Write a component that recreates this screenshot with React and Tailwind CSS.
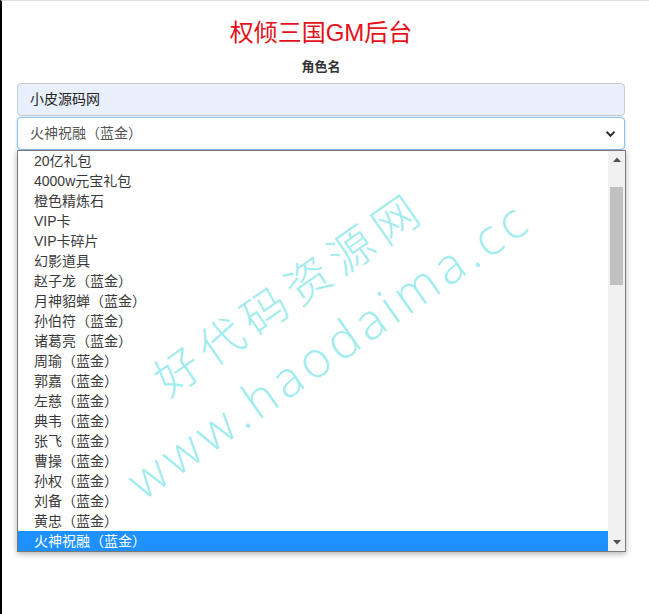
import React from "react";

const items = [
  "20亿礼包",
  "4000w元宝礼包",
  "橙色精炼石",
  "VIP卡",
  "VIP卡碎片",
  "幻影道具",
  "赵子龙（蓝金）",
  "月神貂蝉（蓝金）",
  "孙伯符（蓝金）",
  "诸葛亮（蓝金）",
  "周瑜（蓝金）",
  "郭嘉（蓝金）",
  "左慈（蓝金）",
  "典韦（蓝金）",
  "张飞（蓝金）",
  "曹操（蓝金）",
  "孙权（蓝金）",
  "刘备（蓝金）",
  "黄忠（蓝金）",
  "火神祝融（蓝金）",
];

export default function App() {
  return (
    <div
      className="relative w-[649px] h-[614px] overflow-hidden bg-white border-l-[2px] border-l-black border-t border-t-[#dedede]"
      style={{ fontFamily: '"Liberation Sans", "Noto Sans CJK SC", sans-serif' }}
    >
      <div className="ml-[15px] w-[608px] flex flex-col">
        <h1 className="pt-[18px] text-center text-[24px] leading-[28px] text-[#e3121b]">
          权倾三国GM后台
        </h1>
        <div className="mt-[11px] text-center text-[13px] leading-[18px] font-bold text-[#333]">
          角色名
        </div>
        <div className="mt-[7px] h-[33px] rounded-[4px] border border-[#c8ccd0] bg-[#e8f0fe] pl-[12px] flex items-center text-[14px] text-[#222]">
          小皮源码网
        </div>
        <div className="mt-[1px] h-[33px] rounded-[4px] border border-[#8fc1ea] bg-white pl-[12px] pr-[8px] flex items-center justify-between text-[14px] text-[#555] shadow-[0_0_3px_rgba(102,175,233,0.5)]">
          <span>火神祝融（蓝金）</span>
          <svg width="11" height="8" viewBox="0 0 11 8">
            <path d="M1.5 1.8 L5.5 5.8 L9.5 1.8" fill="none" stroke="#333" strokeWidth="2" />
          </svg>
        </div>
        <div className="w-[609px] border border-[#7a7a7a] bg-white flex shadow-[0_2px_6px_rgba(0,0,0,0.3)]">
          <div className="flex-1 flex flex-col">
            {items.map((t, i) => {
              const sel = i === items.length - 1;
              return (
                <div
                  key={t}
                  className={
                    sel
                      ? "h-[20px] pl-[16px] flex items-center text-[14px] leading-[20px] bg-[#1e90ff] text-white"
                      : "h-[20px] pl-[16px] flex items-center text-[14px] leading-[20px] text-[#3a3a3a]"
                  }
                >
                  {t}
                </div>
              );
            })}
          </div>
          <div className="w-[17px] bg-[#f1f1f1] flex flex-col items-center">
            <div className="h-[17px] w-full flex items-center justify-center">
              <svg width="8" height="5" viewBox="0 0 8 5">
                <path d="M0 5 L4 0.5 L8 5 Z" fill="#505050" />
              </svg>
            </div>
            <div className="mt-[19px] h-[98px] w-[13px] bg-[#c1c1c1]" />
            <div className="flex-1" />
            <div className="h-[17px] w-full flex items-center justify-center">
              <svg width="8" height="5" viewBox="0 0 8 5">
                <path d="M0 0 L8 0 L4 4.5 Z" fill="#505050" />
              </svg>
            </div>
          </div>
        </div>
      </div>

      <div
        className="absolute left-[306px] top-[319px] -translate-x-1/2 -translate-y-1/2 -rotate-[35deg] pointer-events-none flex flex-col items-center text-[#a2ecee] font-light whitespace-nowrap"
        style={{ fontFamily: '"Noto Sans CJK SC", "Open Sans", sans-serif' }}
      >
        <div className="text-[45px] leading-[70px] tracking-[8px]">好代码资源网</div>
        <div className="text-[50px] leading-[70px] tracking-[5px]" style={{ fontFamily: '"Open Sans", "Noto Sans", sans-serif' }}>
          www.haodaima.cc
        </div>
      </div>
    </div>
  );
}
